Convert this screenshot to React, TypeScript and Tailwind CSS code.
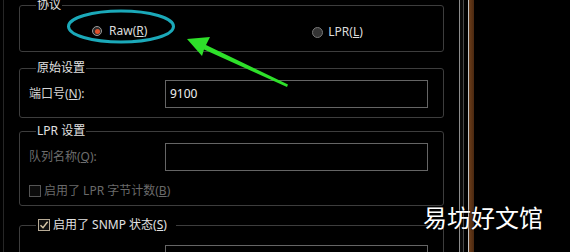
import React from 'react';

const font = "font-['Noto_Sans','Noto_Sans_CJK_SC',sans-serif]";

const Group: React.FC<{ legend: React.ReactNode; className?: string; children: React.ReactNode }> = ({ legend, className = '', children }) => (
  <fieldset className={`w-[425px] border border-[#3d3d3d] rounded-[3px] px-[9px] ${className}`}>
    <legend className="ml-[7px] px-[1px] text-[12px] leading-[10px] text-[#e2e2e2]">{legend}</legend>
    {children}
  </fieldset>
);

const Field: React.FC<{ label: React.ReactNode; value?: string; dim?: boolean; className?: string }> = ({ label, value, dim, className = '' }) => (
  <div className={`flex items-center ${className}`}>
    <span className={`w-[136px] text-[12px] ${dim ? 'text-[#6e6e6e]' : 'text-[#d6d6d6]'}`}>{label}</span>
    <div className="w-[263px] h-[28px] border border-[#656565] flex items-center px-[4px] text-[12px] text-[#eeeeee]">{value}</div>
  </div>
);

export default function App() {
  return (
    <div className={`relative w-[570px] h-[252px] bg-black overflow-hidden flex ${font}`}>
      <div className="w-[459px] h-full pl-[3px]">
        <div className="h-full border-l border-[#262626] pl-[15px]">
          <Group legend="协议" className="h-[52px]">
            <div className="flex items-center h-[16px] mt-[13px] text-[12px] text-[#dcdcdc]">
              <span className="ml-[63px] w-[10px] h-[10px] rounded-full border border-[#9a9a9a] bg-[#2a2a2a] flex items-center justify-center">
                <span className="w-[5px] h-[5px] rounded-full bg-[#e0502a]" />
              </span>
              <span className="ml-[7px]">Raw(<u>R</u>)</span>
              <span className="ml-[165px] w-[11px] h-[11px] rounded-full border border-[#777] bg-[#333] mt-[2px]" />
              <span className="ml-[5px] mt-[2px]">LPR(<u>L</u>)</span>
            </div>
          </Group>

          <Group legend="原始设置" className="mt-[11px] pb-[9px]">
            <Field className="mt-[7px]" label={<>端口号(<u>N</u>):</>} value="9100" />
          </Group>

          <Group legend="LPR 设置" className="mt-[8px] pb-[7px]">
            <Field className="mt-[7px]" dim label={<>队列名称(<u>Q</u>):</>} />
            <div className="flex items-center h-[14px] mt-[13px] text-[12px] text-[#6a6a6a]">
              <span className="w-[12px] h-[12px] border border-[#555] bg-[#0c0c0c]" />
              <span className="ml-[3px]">启用了 LPR 字节计数(<u>B</u>)</span>
            </div>
          </Group>

          <fieldset className="w-[425px] h-[60px] mt-[12px] border border-[#3d3d3d] rounded-[3px] px-[9px]">
            <legend className="ml-[7px] pl-[2px] pr-[9px] flex items-center h-[14px] text-[12px] text-[#e2e2e2]">
              <span className="w-[12px] h-[12px] border border-[#b8ab96] bg-[#111] flex items-center justify-center">
                <svg width="10" height="10" viewBox="0 0 10 10">
                  <path d="M1.5 5.2 L4 7.8 L8.6 1.8" fill="none" stroke="#d8c8a8" strokeWidth="1.4" />
                </svg>
              </span>
              <span className="ml-[3px]">启用了 SNMP 状态(<u>S</u>)</span>
            </legend>
            <Field className="mt-[13px]" label={<>社区名称(<u>C</u>):</>} value="public" />
          </fieldset>
        </div>
      </div>

      <div className="w-px h-full bg-[#8c8c8c]" />
      <div className="w-[3px] h-full bg-[#0a0a0a]" />
      <div className="w-px h-full bg-[#4a4a4a]" />
      <div className="w-[4px] h-full bg-black" />
      <div className="w-px h-full bg-[#c4c4c4]" />
      <div className="w-[5px] h-full bg-gradient-to-r from-[#6b3d1a] to-[#4a2810]" />
      <div className="flex-1 h-full bg-black" />

      <svg className="absolute inset-0 pointer-events-none" width="570" height="252" viewBox="0 0 570 252">
        <ellipse cx="121" cy="26.5" rx="52.5" ry="15.5" fill="none" stroke="#1ba9b9" strokeWidth="3" />
        <polygon
          points="187,39 210,37 206,45 288,84.5 287,87 204,49.5 202,56"
          fill="#2ee02a"
        />
      </svg>

      <div className="absolute left-[423px] top-[205px] text-[24px] leading-none text-white tracking-[0px] [text-shadow:0_0_2px_#000] font-['Noto_Sans_CJK_SC',sans-serif]">
        易坊好文馆
      </div>
    </div>
  );
}
